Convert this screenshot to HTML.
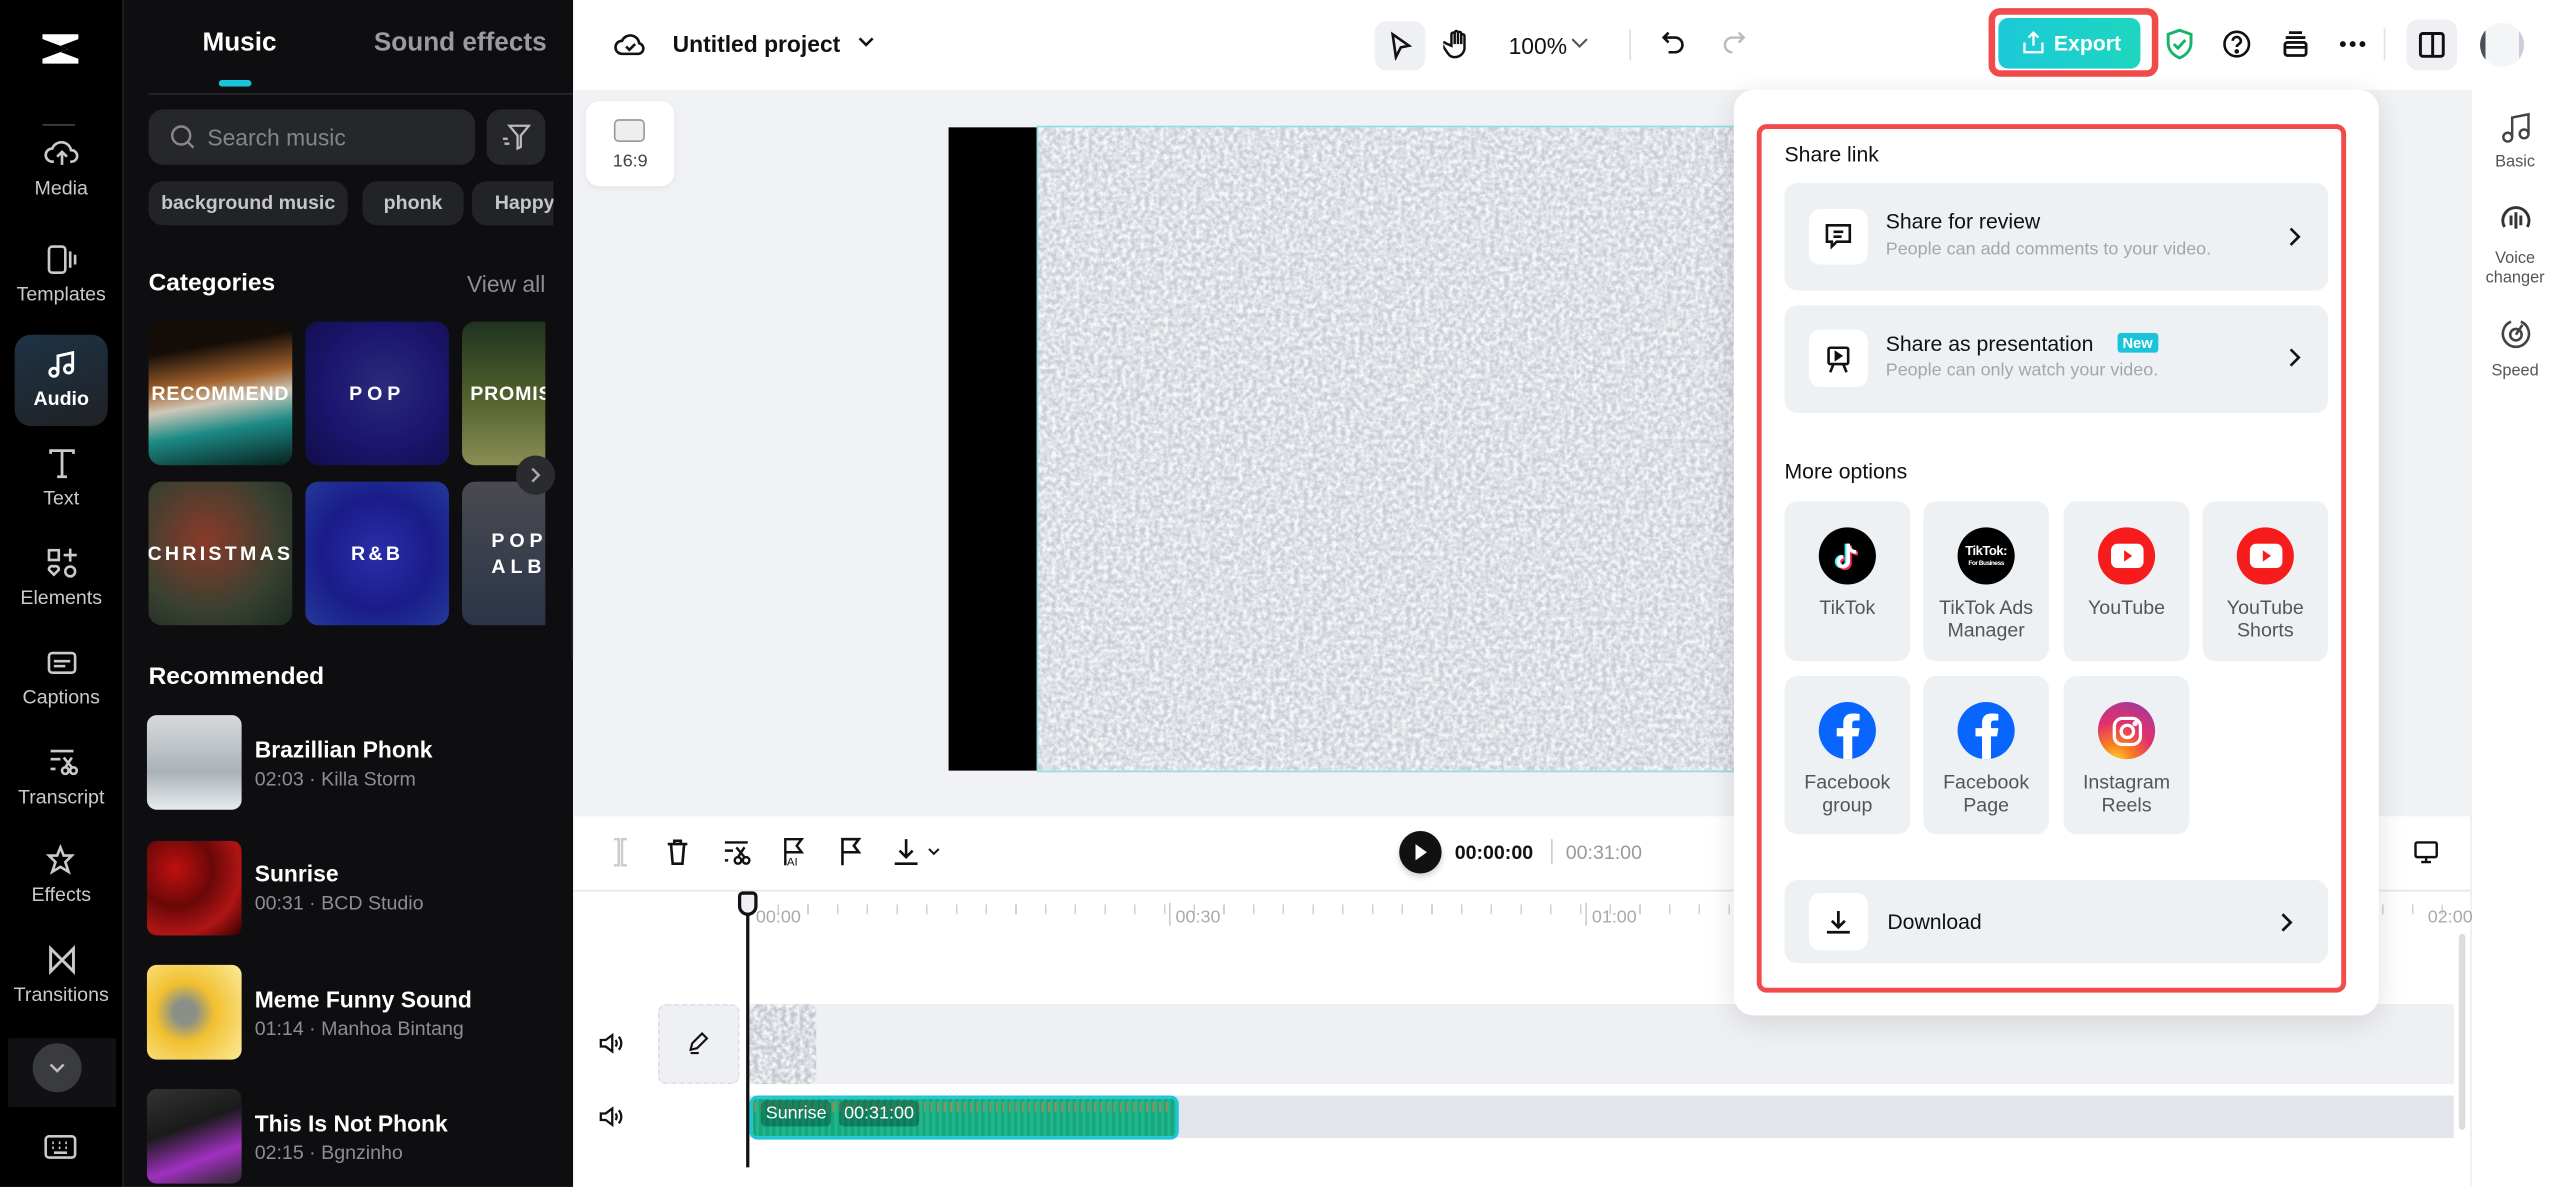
<!DOCTYPE html>
<html><head><meta charset="utf-8"><style>
*{box-sizing:border-box;margin:0;padding:0}
html,body{width:2560px;height:1186px;overflow:hidden;background:#fff}
#s{position:absolute;left:0;top:0;width:1568px;height:727px;transform:scale(1.632653);transform-origin:0 0;font-family:"Liberation Sans",sans-serif;overflow:hidden;background:#fff}
.a{position:absolute}
.side{left:0;top:0;width:75px;height:727px;background:#000}
.si{position:absolute;left:0;width:75px;text-align:center;color:#c9cacc;font-size:12px}
.si svg{display:block;margin:0 auto 4px}
.panel{left:75px;top:0;width:276px;height:727px;background:#0e0e10;border-left:1px solid #1c1c1f}
.w{color:#fff}
.tile{position:absolute;width:88px;height:88px;border-radius:8px;color:#fff;font-weight:bold;font-size:12px;display:flex;align-items:center;justify-content:center;letter-spacing:.5px;overflow:hidden;text-align:center}
.rec .th{position:absolute;left:90px;width:58px;height:58px;border-radius:6px}
.rt{position:absolute;left:156px;color:#fff;font-size:14px;font-weight:bold}
.rs{position:absolute;left:156px;color:#8d8e92;font-size:12px}
.card{position:absolute;background:#eef1f4;border-radius:8px}
.ib{position:absolute;background:#fff;border-radius:7px;display:flex;align-items:center;justify-content:center}
.gt{position:absolute;width:77px;height:98px;background:#eef1f4;border-radius:8px;text-align:center;font-size:12px;color:#555;line-height:14px}
.gt .lg{width:35px;height:35px;border-radius:50%;margin:16px auto 7px;display:flex;align-items:center;justify-content:center}
.tb{position:absolute;top:512px}
</style></head><body><div id="s">

<!-- left sidebar -->
<div class="a side">
 <svg class="a" style="left:23px;top:18px" width="28" height="24" viewBox="0 0 28 24"><path d="M3 3 L25 3 L25 6 L9 12 L25 18 L25 21 L3 21 L3 18 L19 12 L3 6Z" fill="#fff"/><path d="M3 6 L19 12 L3 18" fill="#000"/></svg>
 <div class="a" style="left:26px;top:76px;width:20px;height:1px;background:#444"></div>
 <div class="si" style="top:84px"><svg width="22" height="20" viewBox="0 0 22 20" fill="none" stroke="#c9cacc" stroke-width="1.6"><path d="M6 15H5a4 4 0 010-8 6 6 0 0111.5 1A3.5 3.5 0 0117 15h-1"/><path d="M11 17V10M8 12l3-3 3 3"/></svg>Media</div>
 <div class="si" style="top:149px"><svg width="20" height="20" viewBox="0 0 20 20" fill="none" stroke="#c9cacc" stroke-width="1.6"><rect x="2" y="2" width="10" height="16" rx="2"/><path d="M15 5v10M18 7v6"/></svg>Templates</div>
 <div class="a" style="left:9px;top:205px;width:57px;height:56px;border-radius:10px;background:linear-gradient(160deg,#1d3345,#202125)"></div>
 <div class="si" style="top:213px;color:#fff;font-weight:bold"><svg width="20" height="20" viewBox="0 0 20 20" fill="none" stroke="#fff" stroke-width="1.8"><circle cx="5" cy="15" r="2.5"/><circle cx="14" cy="13" r="2.5"/><path d="M7.5 15V5l9-2v10"/></svg>Audio</div>
 <div class="si" style="top:274px"><svg width="20" height="20" viewBox="0 0 20 20" fill="none" stroke="#c9cacc" stroke-width="1.7"><path d="M3 4V2h14v2M10 2v16M7 18h6"/></svg>Text</div>
 <div class="si" style="top:335px"><svg width="20" height="20" viewBox="0 0 20 20" fill="none" stroke="#c9cacc" stroke-width="1.6"><rect x="2" y="2" width="6" height="6"/><path d="M15 1v8M11 5h8"/><path d="M5 17l-3-3a2 2 0 013-2 2 2 0 013 2z"/><circle cx="15" cy="15" r="3"/></svg>Elements</div>
 <div class="si" style="top:396px"><svg width="20" height="20" viewBox="0 0 20 20" fill="none" stroke="#c9cacc" stroke-width="1.6"><rect x="2" y="4" width="16" height="12" rx="2"/><path d="M5 9h10M5 12h7"/></svg>Captions</div>
 <div class="si" style="top:457px"><svg width="20" height="20" viewBox="0 0 20 20" fill="none" stroke="#c9cacc" stroke-width="1.6"><path d="M3 3h14M3 8h6M3 14h3"/><circle cx="12" cy="15" r="2"/><circle cx="17" cy="15" r="2"/><path d="M11 7l5 6M16 7l-4 6"/></svg>Transcript</div>
 <div class="si" style="top:517px"><svg width="20" height="20" viewBox="0 0 20 20" fill="none" stroke="#c9cacc" stroke-width="1.6"><path d="M9 2l2 5 5 0-4 4 2 6-5-3-5 3 2-6-4-4 5 0z"/></svg>Effects</div>
 <div class="si" style="top:578px"><svg width="20" height="20" viewBox="0 0 20 20" fill="none" stroke="#c9cacc" stroke-width="1.8"><path d="M3 3v14l14-14v14z"/></svg>Transitions</div>
 <div class="a" style="left:5px;top:636px;width:66px;height:42px;background:#111114"></div>
 <div class="a" style="left:20px;top:639px;width:30px;height:30px;border-radius:50%;background:#3a3b3f"></div>
 <svg class="a" style="left:29px;top:650px" width="12" height="8" viewBox="0 0 12 8" fill="none" stroke="#bbb" stroke-width="1.6"><path d="M2 2l4 4 4-4"/></svg>
 <svg class="a" style="left:27px;top:695px" width="20" height="16" viewBox="0 0 20 16" fill="none" stroke="#c9cacc" stroke-width="1.6"><rect x="1" y="1" width="18" height="13" rx="2"/><path d="M5 5h1M9 5h1M13 5h1M5 8h1M9 8h1M13 8h1M6 11h8"/></svg>
</div>

<!-- music panel -->
<div class="a panel">
 <div class="a w" style="left:48px;top:18px;font-size:16px;font-weight:bold">Music</div>
 <div class="a" style="left:153px;top:18px;font-size:16px;font-weight:bold;color:#9a9b9e">Sound effects</div>
 <div class="a" style="left:58px;top:49px;width:20px;height:4px;border-radius:2px;background:#19c4d8"></div>
 <div class="a" style="left:15px;top:57px;width:260px;height:1px;background:#26272a"></div>
 <div class="a" style="left:15px;top:67px;width:200px;height:34px;border-radius:9px;background:#26272b"></div>
 <svg class="a" style="left:28px;top:76px" width="16" height="16" viewBox="0 0 16 16" fill="none" stroke="#888" stroke-width="1.5"><circle cx="7" cy="7" r="5.5"/><path d="M11 11l3.5 3.5"/></svg>
 <div class="a" style="left:51px;top:76px;font-size:14px;color:#85868a">Search music</div>
 <div class="a" style="left:222px;top:67px;width:36px;height:34px;border-radius:9px;background:#26272b"></div>
 <svg class="a" style="left:232px;top:76px" width="17" height="16" viewBox="0 0 17 16" fill="none" stroke="#bbb" stroke-width="1.4"><path d="M4 1h12l-5 6v7l-2 1V7z"/><path d="M0 9h3M1 12h3"/></svg>
 <div class="a" style="left:15px;top:111px;width:122px;height:27px;border-radius:9px;background:#222326;color:#c5c6c9;font-size:12px;font-weight:bold;line-height:27px;text-align:center">background music</div>
 <div class="a" style="left:146px;top:111px;width:62px;height:27px;border-radius:9px;background:#222326;color:#c5c6c9;font-size:12px;font-weight:bold;line-height:27px;text-align:center">phonk</div>
 <div class="a" style="left:213px;top:111px;width:50px;height:27px;border-radius:9px 0 0 9px;background:#222326;color:#c5c6c9;font-size:12px;font-weight:bold;line-height:27px;padding-left:14px;overflow:hidden">Happy</div>
 <div class="a w" style="left:15px;top:165px;font-size:15px;font-weight:bold">Categories</div>
 <div class="a" style="left:210px;top:166px;font-size:14px;color:#8d8e92">View all</div>
 <div class="tile" style="left:15px;top:197px;background:linear-gradient(170deg,#140d08 20%,#a2622c 42%,#cfc7b9 55%,#1c8a85 72%,#08201e)">RECOMMEND</div>
 <div class="tile" style="left:111px;top:197px;background:radial-gradient(circle at 55% 45%,#2c2a7a,#1c1670 50%,#120d48);letter-spacing:3px">POP</div>
 <div class="tile" style="left:207px;top:197px;width:51px;border-radius:8px 0 0 8px;background:linear-gradient(180deg,#1f3320,#4e5e2a 50%,#8a8e55);justify-content:flex-start;padding-left:5px">PROMIS</div>
 <div class="tile" style="left:15px;top:295px;background:radial-gradient(circle at 40% 40%,#8a3a2a,#394030 60%,#1a2a22);letter-spacing:2px">CHRISTMAS</div>
 <div class="tile" style="left:111px;top:295px;background:radial-gradient(circle,#2a2ea8,#1a1c8a 55%,#233a9a);letter-spacing:2px">R&amp;B</div>
 <div class="tile" style="left:207px;top:295px;width:51px;border-radius:8px 0 0 8px;background:linear-gradient(180deg,#4a4a50,#2a3548);justify-content:flex-start;padding-left:18px;letter-spacing:3px;line-height:16px;text-align:left">POP<br>ALBU</div>
 <div class="a" style="left:240px;top:279px;width:24px;height:24px;border-radius:50%;background:#2a2b2f"></div>
 <svg class="a" style="left:248px;top:286px" width="8" height="10" viewBox="0 0 8 10" fill="none" stroke="#aaa" stroke-width="1.5"><path d="M2 1l4 4-4 4"/></svg>
 <div class="a w" style="left:15px;top:406px;font-size:15px;font-weight:bold">Recommended</div>
</div>
<div class="rec">
 <div class="th" style="top:438px;background:linear-gradient(180deg,#d8dadc,#aab2b8 60%,#e8ecee)"></div>
 <div class="rt" style="top:451px">Brazillian Phonk</div><div class="rs" style="top:470px">02:03 · Killa Storm</div>
 <div class="th" style="top:515px;background:radial-gradient(circle at 30% 30%,#c01010,#6a0808 40%,#b01515 70%,#300)"></div>
 <div class="rt" style="top:527px">Sunrise</div><div class="rs" style="top:546px">00:31 · BCD Studio</div>
 <div class="th" style="top:591px;background:radial-gradient(circle at 40% 50%,#8a9088 15%,#f2c030 40%,#fbeb9a)"></div>
 <div class="rt" style="top:604px">Meme Funny Sound</div><div class="rs" style="top:623px">01:14 · Manhoa Bintang</div>
 <div class="th" style="top:667px;background:linear-gradient(160deg,#333,#1a1a1a 40%,#a030c0 70%,#2a2a2a)"></div>
 <div class="rt" style="top:680px">This Is Not Phonk</div><div class="rs" style="top:699px">02:15 · Bgnzinho</div>
</div>
<div class="a" style="left:350px;top:348px;width:9px;height:55px;background:#1e1e22;border-radius:0 6px 6px 0"></div>

<!-- top bar -->
<svg class="a" style="left:376px;top:18px" width="20" height="18" viewBox="0 0 20 18" fill="none" stroke="#111" stroke-width="1.6"><path d="M5 15a4 4 0 010-8 5.5 5.5 0 0110.5 1.5A3.3 3.3 0 0115 15z"/><path d="M7.5 10.5l2 2 3.5-3.5"/></svg>
<div class="a" style="left:412px;top:19px;font-size:14px;font-weight:bold;color:#111">Untitled project</div>
<svg class="a" style="left:525px;top:22px" width="11" height="8" viewBox="0 0 11 8" fill="none" stroke="#111" stroke-width="1.6"><path d="M1.5 1.5l4 4 4-4"/></svg>
<div class="a" style="left:842px;top:13px;width:31px;height:30px;border-radius:7px;background:#eef0f3"></div>
<svg class="a" style="left:850px;top:19px" width="16" height="18" viewBox="0 0 16 18" fill="none" stroke="#111" stroke-width="1.6"><path d="M3 2l10 7-5 1-3 6z"/></svg>
<svg class="a" style="left:884px;top:17px" width="18" height="20" viewBox="0 0 18 20" fill="none" stroke="#111" stroke-width="1.5"><path d="M5 11V4a1 1 0 012 0v6V3a1 1 0 012 0v7V3.5a1 1 0 012 0V10V5a1 1 0 012 0v8a6 6 0 01-6 5c-3 0-4-2-6-5l-1.5-2.5a1 1 0 012-1z"/></svg>
<div class="a" style="left:924px;top:20px;font-size:14px;color:#111">100%</div>
<svg class="a" style="left:962px;top:23px" width="11" height="7" viewBox="0 0 11 7" fill="none" stroke="#555" stroke-width="1.3"><path d="M1 1l4.5 4.5L10 1"/></svg>
<div class="a" style="left:998px;top:18px;width:1px;height:19px;background:#ddd"></div>
<svg class="a" style="left:1017px;top:18px" width="16" height="18" viewBox="0 0 16 18" fill="none" stroke="#111" stroke-width="1.6"><path d="M5 2L2 5l3 3"/><path d="M2 5h7a4.5 4.5 0 010 9H5"/></svg>
<svg class="a" style="left:1054px;top:18px" width="16" height="18" viewBox="0 0 16 18" fill="none" stroke="#bbb" stroke-width="1.5"><path d="M11 2l3 3-3 3"/><path d="M14 5H7a4.5 4.5 0 000 9"/></svg>
<div class="a" style="left:1218px;top:5px;width:104px;height:42px;border:4px solid #f24b4b;border-radius:7px"></div>
<div class="a" style="left:1224px;top:11px;width:87px;height:31px;border-radius:6px;background:linear-gradient(90deg,#1bc9d8,#1ed6c0);color:#fff;font-size:13px;font-weight:bold;line-height:31px;padding-left:34px">Export</div>
<svg class="a" style="left:1239px;top:19px" width="13" height="15" viewBox="0 0 13 15" fill="none" stroke="#fff" stroke-width="1.4"><path d="M6.5 1v8M3.5 4l3-3 3 3M1 7v6h11V7"/></svg>
<svg class="a" style="left:1326px;top:17px" width="18" height="20" viewBox="0 0 18 20" fill="none" stroke="#16b36a" stroke-width="1.8"><path d="M9 1.5l7 2.5v5c0 5-3.5 8-7 9.5C5.5 17 2 14 2 9V4z"/><path d="M5.5 10l2.5 2.5 4.5-5"/></svg>
<svg class="a" style="left:1361px;top:18px" width="18" height="18" viewBox="0 0 18 18" fill="none" stroke="#111" stroke-width="1.6"><circle cx="9" cy="9" r="7.5"/><path d="M6.5 7a2.5 2.5 0 115 .3c0 1.7-2.5 1.7-2.5 3.5"/><circle cx="9" cy="13.5" r=".6" fill="#111"/></svg>
<svg class="a" style="left:1397px;top:18px" width="18" height="18" viewBox="0 0 18 18" fill="none" stroke="#111" stroke-width="1.7"><path d="M5 2h8M3 5h12"/><rect x="2.5" y="8" width="13" height="8" rx="1.5"/><path d="M2.5 11h13"/></svg>
<svg class="a" style="left:1432px;top:24px" width="18" height="6" viewBox="0 0 18 6" fill="#111"><circle cx="3" cy="3" r="1.8"/><circle cx="9" cy="3" r="1.8"/><circle cx="15" cy="3" r="1.8"/></svg>
<div class="a" style="left:1460px;top:17px;width:1px;height:20px;background:#e3e3e3"></div>
<div class="a" style="left:1474px;top:12px;width:31px;height:31px;border-radius:7px;background:#eef0f3"></div>
<svg class="a" style="left:1481px;top:19px" width="17" height="17" viewBox="0 0 17 17" fill="none" stroke="#111" stroke-width="1.8"><rect x="1.5" y="1.5" width="14" height="14" rx="1.5"/><path d="M9 1.5v14"/></svg>
<div class="a" style="left:1519px;top:14px;width:27px;height:27px;border-radius:50%;background:linear-gradient(90deg,#4a5058 0 12%,#f4f5f6 12% 88%,#ccd 88%)"></div>

<!-- canvas area -->
<div class="a" style="left:351px;top:55px;width:1162px;height:445px;background:#f0f2f5"></div>
<div class="a" style="left:359px;top:62px;width:54px;height:52px;border-radius:8px;background:#fff;box-shadow:0 1px 4px rgba(0,0,0,.06)"></div>
<div class="a" style="left:376px;top:73px;width:19px;height:14px;border:1.5px solid #999;border-radius:3px;background:#eee"></div>
<div class="a" style="left:359px;top:93px;width:54px;text-align:center;font-size:11px;color:#444">16:9</div>
<div class="a" style="left:581px;top:78px;width:54px;height:394px;background:#000"></div>
<div class="a" style="left:635px;top:77px;width:430px;height:396px;border:1px solid #8fe0e6;background:#dfe2e6"></div>
<svg class="a" style="left:636px;top:78px" width="428" height="394">
 <filter id="sn"><feTurbulence type="fractalNoise" baseFrequency="0.35" numOctaves="3" seed="4"/><feColorMatrix values="0 0 0 0 0.93  0 0 0 0 0.94  0 0 0 0 0.96  0 0 0 -2.2 1.55"/></filter>
 <rect width="428" height="394" fill="#c9ced5"/>
 <rect width="428" height="394" filter="url(#sn)"/>
</svg>

<!-- right panel -->
<div class="a" style="left:1513px;top:55px;width:55px;height:672px;background:#fff;border-left:1px solid #eee"></div>
<svg class="a" style="left:1531px;top:67px" width="20" height="22" viewBox="0 0 20 22" fill="none" stroke="#444" stroke-width="1.5"><circle cx="5" cy="17" r="2.7"/><circle cx="15" cy="15" r="2.7"/><path d="M7.7 17V5l10-2v12"/></svg>
<div class="a" style="left:1513px;top:94px;width:55px;text-align:center;font-size:10px;color:#555">Basic</div>
<svg class="a" style="left:1530px;top:124px" width="22" height="22" viewBox="0 0 22 22" fill="none" stroke="#333" stroke-width="1.8"><path d="M4 15a8 8 0 1114 0"/><path d="M8 8v6M11 6v10M14 8v6"/></svg>
<div class="a" style="left:1513px;top:153px;width:55px;text-align:center;font-size:10px;color:#555;line-height:12px">Voice<br>changer</div>
<svg class="a" style="left:1531px;top:194px" width="20" height="20" viewBox="0 0 20 20" fill="none" stroke="#444" stroke-width="1.6"><path d="M13 3a8 8 0 11-6 0"/><circle cx="10" cy="11" r="3.5"/><path d="M10 11l4-6"/></svg>
<div class="a" style="left:1513px;top:222px;width:55px;text-align:center;font-size:10px;color:#555">Speed</div>

<!-- timeline -->
<div class="a" style="left:351px;top:545px;width:1162px;height:1px;background:#e6e7ea"></div>
<svg class="tb" style="left:372px" width="16" height="20" viewBox="0 0 16 20" fill="none" stroke="#ccc" stroke-width="1.5"><path d="M4 2h3v16H4M12 2H9v16h3"/></svg>
<svg class="tb" style="left:407px" width="16" height="20" viewBox="0 0 16 20" fill="none" stroke="#111" stroke-width="1.6"><path d="M2 5h12M6 5V3h4v2M4 5l1 12h6l1-12"/></svg>
<svg class="tb" style="left:442px" width="18" height="20" viewBox="0 0 18 20" fill="none" stroke="#111" stroke-width="1.5"><path d="M2 4h14M2 9h5M2 15h2"/><circle cx="10" cy="15" r="2"/><circle cx="15" cy="15" r="2"/><path d="M9 7l5 6M14 7l-4 6"/></svg>
<svg class="tb" style="left:478px" width="16" height="20" viewBox="0 0 16 20" fill="none" stroke="#111" stroke-width="1.5"><path d="M3 18V2h10l-3 4 3 4H3"/><text x="4" y="18" font-size="7" fill="#111" stroke="none" font-family="Liberation Sans">AI</text></svg>
<svg class="tb" style="left:513px" width="16" height="20" viewBox="0 0 16 20" fill="none" stroke="#111" stroke-width="1.6"><path d="M3 18V2h10l-3 4 3 4H3"/></svg>
<svg class="tb" style="left:546px" width="32" height="20" viewBox="0 0 32 20" fill="none" stroke="#111" stroke-width="1.6"><path d="M9 2v11M5 9l4 4 4-4M2 17h14"/><path d="M23 8l3 3 3-3" stroke-width="1.2"/></svg>
<div class="a" style="left:857px;top:509px;width:26px;height:26px;border-radius:50%;background:#111;box-shadow:0 2px 4px rgba(0,0,0,.2)"></div>
<svg class="a" style="left:866px;top:516px" width="9" height="12" viewBox="0 0 9 12"><path d="M1 1l7 5-7 5z" fill="#fff"/></svg>
<div class="a" style="left:891px;top:515px;font-size:12px;font-weight:bold;color:#111">00:00:00</div>
<div class="a" style="left:950px;top:514px;width:1px;height:15px;background:#ccc"></div>
<div class="a" style="left:959px;top:515px;font-size:12px;color:#999">00:31:00</div>
<svg class="a" style="left:1478px;top:514px" width="16" height="16" viewBox="0 0 16 16" fill="none" stroke="#111" stroke-width="1.5"><rect x="1.5" y="2" width="13" height="9" rx="1"/><path d="M8 11v3M5 14h6"/></svg>
<div class="a" style="left:458px;top:554px;width:1050px;height:6px;background:repeating-linear-gradient(90deg,#d0d2d6 0 1px,transparent 1px 18.2px)"></div>
<div class="a" style="left:716px;top:553px;width:1px;height:14px;background:#ccc"></div>
<div class="a" style="left:971px;top:553px;width:1px;height:14px;background:#ccc"></div>
<div class="a" style="left:463px;top:556px;font-size:11px;color:#aaa">00:00</div>
<div class="a" style="left:720px;top:556px;font-size:11px;color:#aaa">00:30</div>
<div class="a" style="left:975px;top:556px;font-size:11px;color:#aaa">01:00</div>
<div class="a" style="left:1487px;top:556px;font-size:11px;color:#aaa">02:00</div>
<div class="a" style="left:1506px;top:572px;width:4px;height:120px;border-radius:2px;background:#ddd"></div>
<svg class="a" style="left:366px;top:632px" width="16" height="14" viewBox="0 0 16 14" fill="none" stroke="#111" stroke-width="1.4"><path d="M2 5h3l4-3v10l-4-3H2z"/><path d="M11 5a3 3 0 010 4M13 3a6 6 0 010 8"/></svg>
<svg class="a" style="left:366px;top:677px" width="16" height="14" viewBox="0 0 16 14" fill="none" stroke="#111" stroke-width="1.4"><path d="M2 5h3l4-3v10l-4-3H2z"/><path d="M11 5a3 3 0 010 4M13 3a6 6 0 010 8"/></svg>
<div class="a" style="left:403px;top:615px;width:50px;height:49px;border-radius:5px;background:#eef0f3;border:1px dashed #dde"></div>
<svg class="a" style="left:420px;top:632px" width="15" height="15" viewBox="0 0 15 15" fill="none" stroke="#111" stroke-width="1.3"><path d="M3 11l1-4 6-6 3 3-6 6-4 1zM3 13h5"/></svg>
<div class="a" style="left:459px;top:615px;width:1044px;height:49px;background:#eef0f3"></div>
<svg class="a" style="left:459px;top:615px" width="41" height="49"><defs><clipPath id="cc"><rect width="41" height="49" rx="5"/></clipPath></defs><g clip-path="url(#cc)"><rect width="41" height="49" fill="#c2c7ce"/><rect width="41" height="49" filter="url(#sn)"/></g></svg>
<div class="a" style="left:459px;top:671px;width:1044px;height:26px;background:#e2e5e9"></div>
<div class="a" style="left:459px;top:671px;width:263px;height:27px;border-radius:5px;border:2px solid #1ec6d8;background:repeating-linear-gradient(90deg,#17a67d 0 2px,#1fb88c 2px 4px)"></div>
<div class="a" style="left:462px;top:675px;width:255px;height:6px;background:repeating-linear-gradient(90deg,#e07a40 0 1px,transparent 1px 4px);opacity:.7"></div>
<div class="a" style="left:466px;top:674px;padding:0 3px;height:16px;background:rgba(0,70,50,.45);border-radius:3px;color:#fff;font-size:11px;line-height:16px">Sunrise</div>
<div class="a" style="left:514px;top:674px;padding:0 3px;height:16px;background:rgba(0,70,50,.45);border-radius:3px;color:#fff;font-size:11px;line-height:16px">00:31:00</div>
<div class="a" style="left:457px;top:560px;width:2px;height:155px;background:#111"></div>
<div class="a" style="left:452px;top:546px;width:12px;height:15px;border:2px solid #111;border-radius:3px 3px 6px 6px;background:#eef0f3"></div>

<!-- popup -->
<div class="a" style="left:1062px;top:55px;width:395px;height:567px;background:#fff;border-radius:12px;box-shadow:0 4px 18px rgba(0,0,0,.12)"></div>
<div class="a" style="left:1076px;top:76px;width:361px;height:532px;border:3px solid #f24b4b;border-radius:6px"></div>
<div class="a" style="left:1093px;top:87px;font-size:13px;color:#111">Share link</div>
<div class="card" style="left:1093px;top:112px;width:333px;height:66px"></div>
<div class="ib" style="left:1108px;top:128px;width:36px;height:34px"><svg width="18" height="18" viewBox="0 0 18 18" fill="none" stroke="#111" stroke-width="1.6"><path d="M2 2h14v10H8l-3 3v-3H2z"/><path d="M6 6h6M6 9h5"/></svg></div>
<div class="a" style="left:1155px;top:128px;font-size:13px;color:#111">Share for review</div>
<div class="a" style="left:1155px;top:147px;font-size:11px;color:#a3a6ab">People can add comments to your video.</div>
<svg class="a" style="left:1401px;top:139px" width="9" height="12" viewBox="0 0 9 12" fill="none" stroke="#111" stroke-width="1.6"><path d="M2 1l5 5-5 5"/></svg>
<div class="card" style="left:1093px;top:187px;width:333px;height:66px"></div>
<div class="ib" style="left:1108px;top:202px;width:36px;height:35px"><svg width="18" height="18" viewBox="0 0 18 18" fill="none" stroke="#111" stroke-width="1.6"><rect x="3" y="2" width="12" height="10" rx="1"/><path d="M7.5 5v4l3-2z" fill="#111"/><path d="M6 12l-2 5M12 12l2 5"/></svg></div>
<div class="a" style="left:1155px;top:203px;font-size:13px;color:#111">Share as presentation</div>
<div class="a" style="left:1297px;top:204px;height:12px;padding:0 3px;background:#19c4d8;color:#fff;font-size:9px;font-weight:bold;line-height:12px;border-radius:2px">New</div>
<div class="a" style="left:1155px;top:221px;font-size:11px;color:#a3a6ab">People can only watch your video.</div>
<svg class="a" style="left:1401px;top:213px" width="9" height="12" viewBox="0 0 9 12" fill="none" stroke="#111" stroke-width="1.6"><path d="M2 1l5 5-5 5"/></svg>
<div class="a" style="left:1093px;top:281px;font-size:13px;color:#111">More options</div>

<div class="gt" style="left:1093px;top:307px"><div class="lg" style="background:#000"><svg width="18" height="20" viewBox="0 0 18 20"><path d="M9 2v11a3 3 0 11-3-3" fill="none" stroke="#25f4ee" stroke-width="2.4" transform="translate(-1,0)"/><path d="M9 2v11a3 3 0 11-3-3M9 2c0 3 2 5 5 5" fill="none" stroke="#fe2c55" stroke-width="2.4" transform="translate(1,1)"/><path d="M9 2v11a3 3 0 11-3-3M9 2c0 3 2 5 5 5" fill="none" stroke="#fff" stroke-width="2.2"/></svg></div>TikTok</div>
<div class="gt" style="left:1178px;top:307px"><div class="lg" style="background:#000;color:#fff;font-weight:bold;font-size:8px;line-height:8px;flex-direction:column;letter-spacing:-.3px">TikTok:<span style="font-size:4px;line-height:6px">For Business</span></div>TikTok Ads<br>Manager</div>
<div class="gt" style="left:1264px;top:307px"><div class="lg" style="background:#f61c1c"><svg width="20" height="15" viewBox="0 0 20 15"><rect width="20" height="15" rx="4" fill="#fff"/><path d="M8 4l5 3.5L8 11z" fill="#f61c1c"/></svg></div>YouTube</div>
<div class="gt" style="left:1349px;top:307px"><div class="lg" style="background:#f61c1c"><svg width="20" height="15" viewBox="0 0 20 15"><rect width="20" height="15" rx="4" fill="#fff"/><path d="M8 4l5 3.5L8 11z" fill="#f61c1c"/></svg></div>YouTube<br>Shorts</div>
<div class="gt" style="left:1093px;top:414px;height:97px"><div class="lg" style="background:#0866ff;overflow:hidden;align-items:flex-end"><svg width="16" height="28" viewBox="0 0 16 28"><path d="M5 28V14H1v-5h4V6c0-4 2-6 6-6 2 0 4 .3 4 .3v4h-2.5C11 4.3 10.5 5 10.5 6.5V9H15l-.8 5h-3.7v14z" fill="#fff"/></svg></div>Facebook<br>group</div>
<div class="gt" style="left:1178px;top:414px;height:97px"><div class="lg" style="background:#0866ff;overflow:hidden;align-items:flex-end"><svg width="16" height="28" viewBox="0 0 16 28"><path d="M5 28V14H1v-5h4V6c0-4 2-6 6-6 2 0 4 .3 4 .3v4h-2.5C11 4.3 10.5 5 10.5 6.5V9H15l-.8 5h-3.7v14z" fill="#fff"/></svg></div>Facebook<br>Page</div>
<div class="gt" style="left:1264px;top:414px;height:97px"><div class="lg" style="background:radial-gradient(circle at 30% 105%,#fdd835 0,#fa7e1e 25%,#e1306c 55%,#c13584 75%,#833ab4)"><svg width="20" height="20" viewBox="0 0 20 20" fill="none" stroke="#fff" stroke-width="2"><rect x="2" y="2" width="16" height="16" rx="5"/><circle cx="10" cy="10" r="3.8"/><circle cx="14.8" cy="5.2" r=".6" fill="#fff"/></svg></div>Instagram<br>Reels</div>

<div class="card" style="left:1093px;top:539px;width:333px;height:51px"></div>
<div class="ib" style="left:1108px;top:547px;width:36px;height:35px"><svg width="18" height="18" viewBox="0 0 18 18" fill="none" stroke="#111" stroke-width="1.7"><path d="M9 2v10M5 8l4 4 4-4M2 15h14"/></svg></div>
<div class="a" style="left:1156px;top:557px;font-size:13px;color:#111">Download</div>
<svg class="a" style="left:1396px;top:559px" width="9" height="12" viewBox="0 0 9 12" fill="none" stroke="#111" stroke-width="1.7"><path d="M2 1l5 5-5 5"/></svg>

</div></body></html>
